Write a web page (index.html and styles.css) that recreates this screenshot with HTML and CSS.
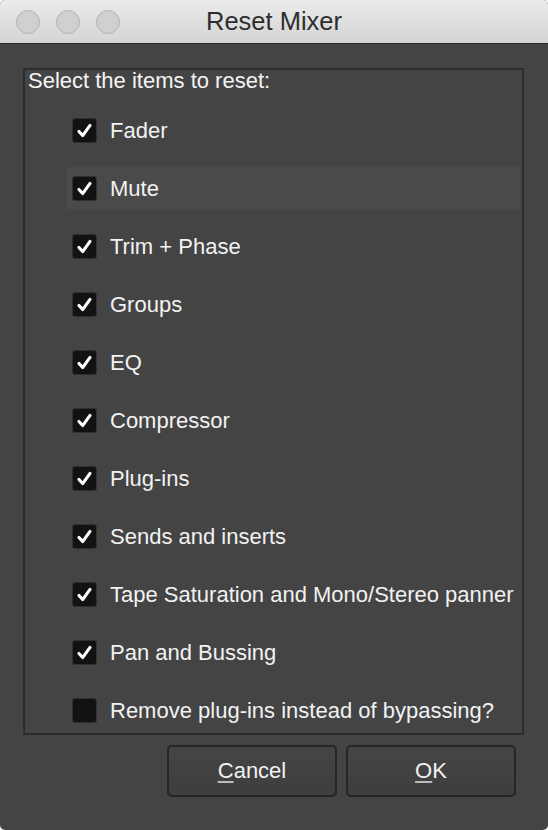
FILE: index.html
```html
<!DOCTYPE html>
<html>
<head>
<meta charset="utf-8">
<link rel="stylesheet" href="styles.css">
</head>
<body>
<div class="window">
  <div class="titlebar">
    <div class="lights">
      <span class="light"></span>
      <span class="light"></span>
      <span class="light"></span>
    </div>
    <div class="title">Reset Mixer</div>
  </div>
  <div class="content">
    <div class="panel">
      <div class="heading">Select the items to reset:</div>
      <div class="rows">
        <div class="row"><span class="box checked"><svg viewBox="0 0 25 25"><path d="M6.5 13.5 L10.5 18 L18.5 7" /></svg></span><span class="label">Fader</span></div>
        <div class="row hover"><span class="box checked"><svg viewBox="0 0 25 25"><path d="M6.5 13.5 L10.5 18 L18.5 7" /></svg></span><span class="label">Mute</span></div>
        <div class="row"><span class="box checked"><svg viewBox="0 0 25 25"><path d="M6.5 13.5 L10.5 18 L18.5 7" /></svg></span><span class="label">Trim + Phase</span></div>
        <div class="row"><span class="box checked"><svg viewBox="0 0 25 25"><path d="M6.5 13.5 L10.5 18 L18.5 7" /></svg></span><span class="label">Groups</span></div>
        <div class="row"><span class="box checked"><svg viewBox="0 0 25 25"><path d="M6.5 13.5 L10.5 18 L18.5 7" /></svg></span><span class="label">EQ</span></div>
        <div class="row"><span class="box checked"><svg viewBox="0 0 25 25"><path d="M6.5 13.5 L10.5 18 L18.5 7" /></svg></span><span class="label">Compressor</span></div>
        <div class="row"><span class="box checked"><svg viewBox="0 0 25 25"><path d="M6.5 13.5 L10.5 18 L18.5 7" /></svg></span><span class="label">Plug-ins</span></div>
        <div class="row"><span class="box checked"><svg viewBox="0 0 25 25"><path d="M6.5 13.5 L10.5 18 L18.5 7" /></svg></span><span class="label">Sends and inserts</span></div>
        <div class="row"><span class="box checked"><svg viewBox="0 0 25 25"><path d="M6.5 13.5 L10.5 18 L18.5 7" /></svg></span><span class="label">Tape Saturation and Mono/Stereo panner</span></div>
        <div class="row"><span class="box checked"><svg viewBox="0 0 25 25"><path d="M6.5 13.5 L10.5 18 L18.5 7" /></svg></span><span class="label">Pan and Bussing</span></div>
        <div class="row"><span class="box"></span><span class="label">Remove plug-ins instead of bypassing?</span></div>
      </div>
    </div>
    <div class="buttons">
      <button class="btn"><u>C</u>ancel</button>
      <button class="btn"><u>O</u>K</button>
    </div>
  </div>
</div>
</body>
</html>
```
FILE: styles.css
```css
html, body {
  margin: 0;
  padding: 0;
  background: #ffffff;
}
.window {
  width: 548px;
  height: 830px;
  border-radius: 5px;
  overflow: hidden;
  background: #444444;
  display: flex;
  flex-direction: column;
  font-family: "Liberation Sans", Arial, sans-serif;
}
.titlebar {
  height: 43px;
  flex: none;
  background: linear-gradient(#ebebeb, #d4d4d4);
  border-bottom: 1px solid #2e2e2e;
  display: flex;
  align-items: center;
  position: relative;
}
.lights {
  display: flex;
  gap: 16px;
  padding-left: 16px;
}
.light {
  width: 22px;
  height: 22px;
  border-radius: 50%;
  background: #d0d0d0;
  border: 1px solid #b3b3b3;
}
.title {
  position: absolute;
  left: 0;
  right: 0;
  top: 0;
  line-height: 43px;
  text-align: center;
  font-size: 25.5px;
  color: #2d2d2d;
}
.content {
  flex: 1;
  display: flex;
  flex-direction: column;
  padding: 24px 0 0 23px;
}
.panel {
  box-sizing: border-box;
  width: 501px;
  height: 667px;
  border: 2px solid #2c2c2c;
  padding: 0 0 0 3px;
}
.heading {
  font-size: 22px;
  line-height: 22px;
  color: #f4f4f4;
  height: 22px;
  margin-bottom: 17px;
}
.rows {
  display: flex;
  flex-direction: column;
  gap: 15px;
  margin-left: 39px;
  width: 453px;
}
.row {
  height: 43px;
  display: flex;
  align-items: center;
  padding-left: 5px;
  gap: 13px;
}
.row.hover {
  background: #4b4a4a;
}
.box {
  box-sizing: border-box;
  width: 25px;
  height: 25px;
  background: #121212;
  border: 1px solid #303030;
  border-radius: 3px;
  flex: none;
  display: flex;
}
.box svg {
  width: 23px;
  height: 23px;
}
.box svg path {
  fill: none;
  stroke: #ffffff;
  stroke-width: 3.4;
  stroke-linecap: round;
  stroke-linejoin: round;
}
.label {
  font-size: 22px;
  color: #f2f2f2;
  white-space: nowrap;
}
.buttons {
  display: flex;
  justify-content: flex-end;
  gap: 9px;
  padding-right: 32px;
  margin-top: 10px;
}
.btn {
  box-sizing: border-box;
  width: 170px;
  height: 52px;
  background: linear-gradient(#454545, #3e3e3e);
  border: 2px solid #262626;
  border-radius: 5px;
  color: #f2f2f2;
  font-family: "Liberation Sans", Arial, sans-serif;
  font-size: 22px;
  padding: 0;
}
.btn u {
  text-decoration-color: #bbbbbb;
  text-underline-offset: 3px;
}
```
